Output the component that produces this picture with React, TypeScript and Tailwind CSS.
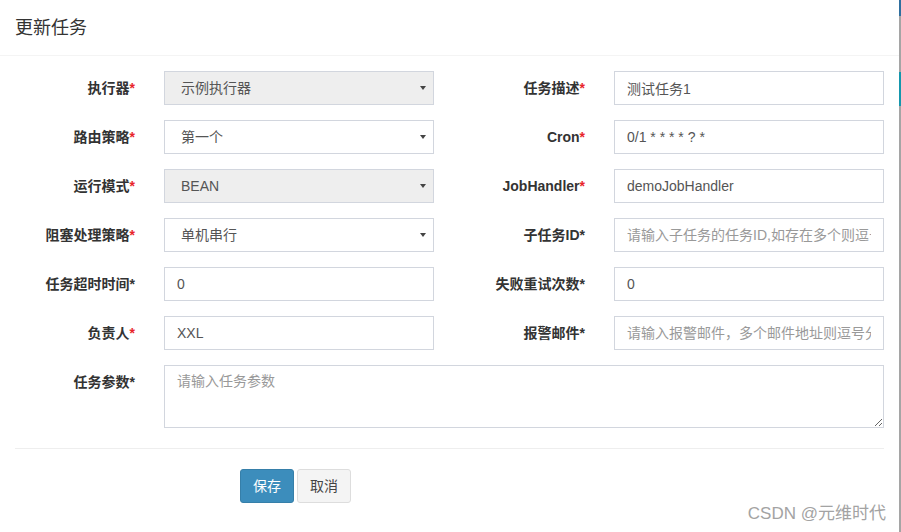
import React from "react";

type Field = {
  label: string;
  red: boolean;
  kind: "select" | "input";
  value?: string;
  placeholder?: string;
  disabled?: boolean;
};

const leftFields: Field[] = [
  { label: "执行器", red: true, kind: "select", value: "示例执行器", disabled: true },
  { label: "路由策略", red: true, kind: "select", value: "第一个" },
  { label: "运行模式", red: true, kind: "select", value: "BEAN", disabled: true },
  { label: "阻塞处理策略", red: true, kind: "select", value: "单机串行" },
  { label: "任务超时时间", red: false, kind: "input", value: "0" },
  { label: "负责人", red: true, kind: "input", value: "XXL" },
];

const rightFields: Field[] = [
  { label: "任务描述", red: true, kind: "input", value: "测试任务1" },
  { label: "Cron", red: true, kind: "input", value: "0/1 * * * * ? *" },
  { label: "JobHandler", red: true, kind: "input", value: "demoJobHandler" },
  { label: "子任务ID", red: false, kind: "input", placeholder: "请输入子任务的任务ID,如存在多个则逗号分隔" },
  { label: "失败重试次数", red: false, kind: "input", value: "0" },
  { label: "报警邮件", red: false, kind: "input", placeholder: "请输入报警邮件，多个邮件地址则逗号分隔" },
];

function Label({ text, red, width }: { text: string; red: boolean; width: string }) {
  return (
    <div className={`${width} shrink-0 text-right text-[14px] font-bold text-[#333] pr-[29px]`}>
      {text}
      <span className={red ? "text-[#e8252b]" : "text-[#333]"}>*</span>
    </div>
  );
}

function Control({ f }: { f: Field }) {
  if (f.kind === "select") {
    return (
      <div
        className={`w-[270px] h-[34px] shrink-0 border border-[#d2d6de] flex items-center justify-between pl-[16px] pr-[6px] text-[14px] text-[#555] ${
          f.disabled ? "bg-[#eeeeee]" : "bg-white"
        }`}
      >
        <span>{f.value}</span>
        <svg width="8" height="6" viewBox="0 0 8 6" aria-hidden="true">
          <path d="M1 1 H7 L4 5 Z" fill="#444" />
        </svg>
      </div>
    );
  }
  return (
    <input
      readOnly
      defaultValue={f.value}
      placeholder={f.placeholder}
      className="w-[270px] h-[34px] shrink-0 border border-[#d2d6de] bg-white px-[12px] text-[14px] text-[#555] placeholder:text-[#999] outline-none"
    />
  );
}

export default function App() {
  return (
    <div
      className="relative w-[901px] h-[532px] bg-white overflow-hidden"
      style={{ fontFamily: '"Liberation Sans", "Noto Sans CJK SC", sans-serif' }}
    >
      {/* Header */}
      <div className="h-[56px] border-b border-[#f4f4f4] flex items-center px-[15px] mr-[2px]">
        <h4 className="text-[18px] text-[#333] leading-none">更新任务</h4>
      </div>

      {/* Body */}
      <div className="pt-[15px] flex flex-col gap-[15px]">
        {leftFields.map((lf, i) => {
          const rf = rightFields[i];
          return (
            <div key={lf.label} className="flex items-center">
              <Label text={lf.label} red={lf.red} width="w-[164px]" />
              <Control f={lf} />
              <Label text={rf.label} red={rf.red} width="w-[180px]" />
              <Control f={rf} />
            </div>
          );
        })}
        <div className="flex items-start">
          <div className="w-[164px] shrink-0 text-right text-[14px] font-bold text-[#333] pr-[29px] pt-[7px]">
            任务参数<span className="text-[#333]">*</span>
          </div>
          <textarea
            readOnly
            placeholder="请输入任务参数"
            className="w-[720px] h-[63px] border border-[#d2d6de] px-[12px] pt-[5px] text-[14px] text-[#555] placeholder:text-[#999] outline-none"
          />
        </div>
      </div>

      {/* Footer */}
      <div className="mx-[15px] mt-[20px] w-[869px] border-t border-[#eeeeee] pt-[20px] pl-[225px] flex gap-[3px]">
        <button className="w-[54px] h-[34px] rounded-[3px] bg-[#3c8dbc] border border-[#367fa9] text-white text-[14px]">
          保存
        </button>
        <button className="w-[54px] h-[34px] rounded-[3px] bg-[#f4f4f4] border border-[#dddddd] text-[#444] text-[14px]">
          取消
        </button>
      </div>

      {/* Watermark */}
      <div className="absolute right-[15px] bottom-[6px] text-[17px] text-[#a3a3a3]">CSDN @元维时代</div>

      {/* Window edge strip */}
      <div className="absolute top-0 right-0 w-[2px] h-full bg-[#a5a5a5] flex flex-col">
        <div className="h-[16px] bg-[#2f6f9f]" />
        <div className="h-[56px]" />
        <div className="h-[34px] bg-[#1597ad]" />
      </div>
    </div>
  );
}
